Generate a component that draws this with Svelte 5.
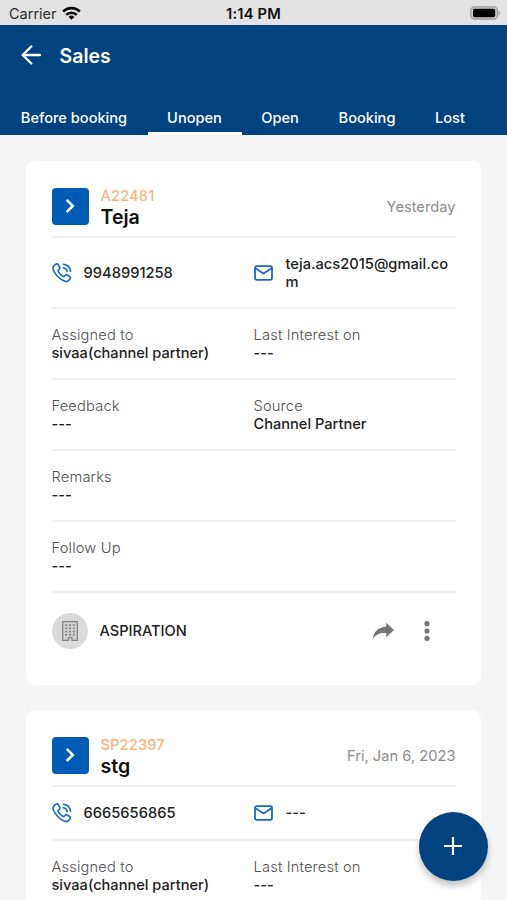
<script>
  const tabs = [
    { name: 'Before booking', width: 147 },
    { name: 'Unopen', width: 94, active: true },
    { name: 'Open', width: 77 },
    { name: 'Booking', width: 97 },
    { name: 'Lost', width: 69 }
  ];

  const leads = [
    {
      code: 'A22481',
      name: 'Teja',
      date: 'Yesterday',
      phone: '9948991258',
      email: 'teja.acs2015@gmail.com',
      tall: true,
      rows: [
        [['Assigned to', 'sivaa(channel partner)'], ['Last Interest on', '---']],
        [['Feedback', '---'], ['Source', 'Channel Partner']],
        [['Remarks', '---']],
        [['Follow Up', '---']]
      ],
      project: 'ASPIRATION'
    },
    {
      code: 'SP22397',
      name: 'stg',
      date: 'Fri, Jan 6, 2023',
      phone: '6665656865',
      email: '---',
      rows: [
        [['Assigned to', 'sivaa(channel partner)'], ['Last Interest on', '---']]
      ]
    }
  ];
</script>

<div class="screen">
  <div class="status">
    <div class="carrier">
      <span>Carrier</span>
      <svg width="19" height="14" viewBox="0 0 20 14">
        <path d="M1.2 5.600a12.200 12.200 0 0 1 17.600 0" fill="none" stroke="#0b0b0b" stroke-width="2.800" />
        <path d="M4.400 9a7.800 7.800 0 0 1 11.200 0" fill="none" stroke="#0b0b0b" stroke-width="2.600" />
        <path d="M10 14 6.900 11.200a4.400 4.400 0 0 1 6.200 0z" fill="#0b0b0b" />
      </svg>
    </div>
    <span class="time">1:14 PM</span>
    <svg class="battery" width="31" height="14" viewBox="0 0 31 14">
      <rect x=".8" y=".8" width="26.600" height="12.400" rx="3.600" fill="#c9c9c9" stroke="#999" stroke-width="1.200" />
      <rect x="3" y="2.700" width="22.200" height="8.600" rx="1.800" fill="#000" />
      <path d="M28.600 4.500c1.600.6 1.600 4.400 0 5z" fill="#999" />
    </svg>
  </div>

  <header>
    <div class="title">
      <svg width="20" height="20" viewBox="0 0 20 20" fill="none" stroke="#fff" stroke-width="2.300" stroke-linecap="round" stroke-linejoin="round">
        <path d="M10.300 1.500 1.600 10l8.700 8.500M1.800 10H19" />
      </svg>
      <h1>Sales</h1>
    </div>
    <nav>
      {#each tabs as tab}
        <div class="tab" class:active={tab.active} style="width: {tab.width}px">{tab.name}</div>
      {/each}
    </nav>
  </header>

  <main>
    {#each leads as lead}
      <article>
        <div class="head">
          <div class="go">
            <svg width="12" height="16" viewBox="0 0 12 16" fill="none" stroke="#fff" stroke-width="2.600">
              <path d="m2.700 1.800 6.100 6.100-6.100 6.100" />
            </svg>
          </div>
          <div class="who">
            <div class="code">{lead.code}</div>
            <div class="name">{lead.name}</div>
          </div>
          <div class="date">{lead.date}</div>
        </div>

        <div class="row contact" class:tall={lead.tall}>
          <div class="cell">
            <svg class="phone" width="20" height="20" viewBox="0 0 20 20" fill="none" stroke="#1a68c4" stroke-width="1.600" stroke-linecap="round" stroke-linejoin="round">
              <path d="M2.400 2.300 4 1.100c.8-.5 1.500-.3 2 .4l1.700 2.600c.5.8.3 1.400-.3 2l-1 .9c-.4.5-.4 1 0 1.700 1.200 2.100 2.400 3.400 4.400 4.600.6.4 1.100.3 1.600-.1l.9-1c.6-.6 1.300-.7 2-.2l2.500 1.700c.7.5.9 1.200.4 1.900l-1.300 1.700c-1 1.300-2.700 1.600-4.500.8C7.400 15.900 3.500 11.900 1.500 7.200.6 5.200.9 3.500 2.400 2.300z" />
              <path d="M11.300 1.200c4 .4 6.900 3.300 7.300 7.200M11.300 4.700c2.200.4 3.500 1.700 3.900 3.800" />
            </svg>
            <span>{lead.phone}</span>
          </div>
          <div class="cell">
            <svg class="mail" width="19" height="16" viewBox="0 0 19 16" fill="none" stroke="#1a68c4" stroke-width="1.800" stroke-linejoin="round" stroke-linecap="round">
              <rect x="1" y="1.100" width="17" height="13.800" rx="1.800" />
              <path d="m1.800 3.400 7.700 5 7.700-5" />
            </svg>
            <span class="email">{lead.email}</span>
          </div>
        </div>

        {#each lead.rows as row}
          <div class="row">
            {#each row as [label, value]}
              <div class="field">
                <div class="label">{label}</div>
                <div class="value" class:empty={value === '---'}>{value}</div>
              </div>
            {/each}
          </div>
        {/each}

        {#if lead.project}
          <div class="foot">
            <div class="avatar">
              <svg width="16" height="20" viewBox="0 0 16 20">
                <path d="M.7.7h14.600v18.600H10v-2.600H6.500v2.600H.7z" fill="#d2d2d2" stroke="#858585" stroke-width="1.300" />
                {#each [3.2, 6.4, 9.6, 12.8] as y}
                  {#each [3.2, 7, 10.8] as x}
                    <rect {x} {y} width="2" height="1.800" fill="#858585" />
                  {/each}
                {/each}
              </svg>
            </div>
            <span class="project">{lead.project}</span>
            <svg class="share" width="23" height="18" viewBox="0 0 23 18">
              <path d="M14.200.7 22 8l-7.800 7.300v-4.200C8.500 10.700 4 12.200.6 16.900 1.600 9.900 6.500 5.300 14.200 4.600z" fill="#757575" />
            </svg>
            <svg class="more" width="6" height="20" viewBox="0 0 6 20" fill="#757575">
              <circle cx="3" cy="2.700" r="2.600" /><circle cx="3" cy="10" r="2.600" /><circle cx="3" cy="17.300" r="2.600" />
            </svg>
          </div>
        {/if}
      </article>
    {/each}
  </main>

  <button class="fab" aria-label="Add">
    <svg width="18" height="18" viewBox="0 0 18 18" stroke="#fff" stroke-width="2.200">
      <path d="M9 0v18M0 9h18" />
    </svg>
  </button>
</div>

<style>
  :global(body) { margin: 0; }
  .screen {
    position: relative;
    width: 507px;
    height: 900px;
    overflow: hidden;
    background: #f5f5f5;
    color: #222;
    font-family: Inter, 'Liberation Sans', sans-serif;
    display: flex;
    flex-direction: column;
  }
  .status {
    flex: none;
    height: 25px;
    box-sizing: border-box;
    padding: 2px 6px 0 9px;
    background: #e2e2e2;
    display: grid;
    grid-template-columns: 1fr auto 1fr;
    align-items: center;
    font-size: 14.500px;
  }
  .carrier { display: flex; align-items: center; gap: 5px; color: #2e2e2e; }
  .carrier svg { margin-top: -2px; }
  .time { font-weight: 600; color: #111; font-size: 14.700px; letter-spacing: .2px; margin-right: 3px; }
  .battery { justify-self: end; margin-top: -2px; }
  header {
    flex: none;
    height: 110px;
    background: #00437f;
    color: #fff;
    display: flex;
    flex-direction: column;
    justify-content: space-between;
  }
  .title { display: flex; align-items: center; padding: 17px 0 0 20.500px; gap: 19px; }
  h1 { margin: 2px 0 0; font-size: 19.500px; line-height: 24px; font-weight: 600; }
  nav { display: flex; padding-left: .5px; }
  .tab {
    box-sizing: border-box;
    height: 34px;
    padding-top: 8px;
    text-align: center;
    font-size: 14.600px;
    line-height: 18px;
    font-weight: 500;
    white-space: nowrap;
    border-bottom: 3px solid transparent;
  }
  .active { border-color: #fff; }
  main { padding: 26px; display: flex; flex-direction: column; gap: 25px; }
  article { flex: none; background: #fff; border-radius: 9px; padding: 0 25.500px; }
  .head {
    height: 77px;
    box-sizing: border-box;
    padding-top: 15px;
    border-bottom: 2px solid #f0f0f0;
    display: flex;
    align-items: center;
  }
  .go {
    width: 37px;
    height: 37px;
    border-radius: 4px;
    background: #005bb5;
    display: flex;
    align-items: center;
    justify-content: center;
  }
  .who { margin: 3px 0 0 12px; flex: 1; }
  .code { color: #f8b583; font-size: 14.700px; line-height: 18px; font-weight: 500; letter-spacing: .1px; }
  .name { color: #111; font-size: 19.600px; line-height: 24px; font-weight: 600; }
  .date { color: #8b8b8b; font-size: 14.700px; margin-top: 1px; }
  .row {
    height: 71px;
    box-sizing: border-box;
    border-bottom: 2px solid #f0f0f0;
    display: grid;
    grid-template-columns: 1fr 1fr;
    align-items: center;
    font-size: 14.700px;
    line-height: 18px;
  }
  .contact { height: 54px; font-weight: 500; }
  .contact.tall { height: 71px; }
  .cell { display: flex; align-items: center; }
  .phone { flex: none; margin-right: 12px; }
  .mail { flex: none; margin-right: 13px; }
  .email { word-break: break-all; }
  .label { color: #505050; font-weight: 300; letter-spacing: .15px; }
  .value { color: #222; font-weight: 550; font-size: 14.600px; }
  .value.empty { font-weight: 500; }
  .foot { height: 92px; box-sizing: border-box; padding-bottom: 17px; display: flex; align-items: center; }
  .avatar {
    width: 36px;
    height: 36px;
    border-radius: 50%;
    background: #dadada;
    display: flex;
    align-items: center;
    justify-content: center;
  }
  .project { margin-left: 12px; flex: 1; font-size: 14.600px; font-weight: 500; }
  .more { margin: 0 26px 0 29px; }
  .fab {
    position: absolute;
    right: 19.500px;
    bottom: 19.500px;
    width: 69px;
    height: 69px;
    padding: 0;
    border: 0;
    border-radius: 50%;
    background: #00437f;
    box-shadow: 0 5px 7px rgba(0, 0, 0, .24);
    display: flex;
    align-items: center;
    justify-content: center;
  }
</style>
